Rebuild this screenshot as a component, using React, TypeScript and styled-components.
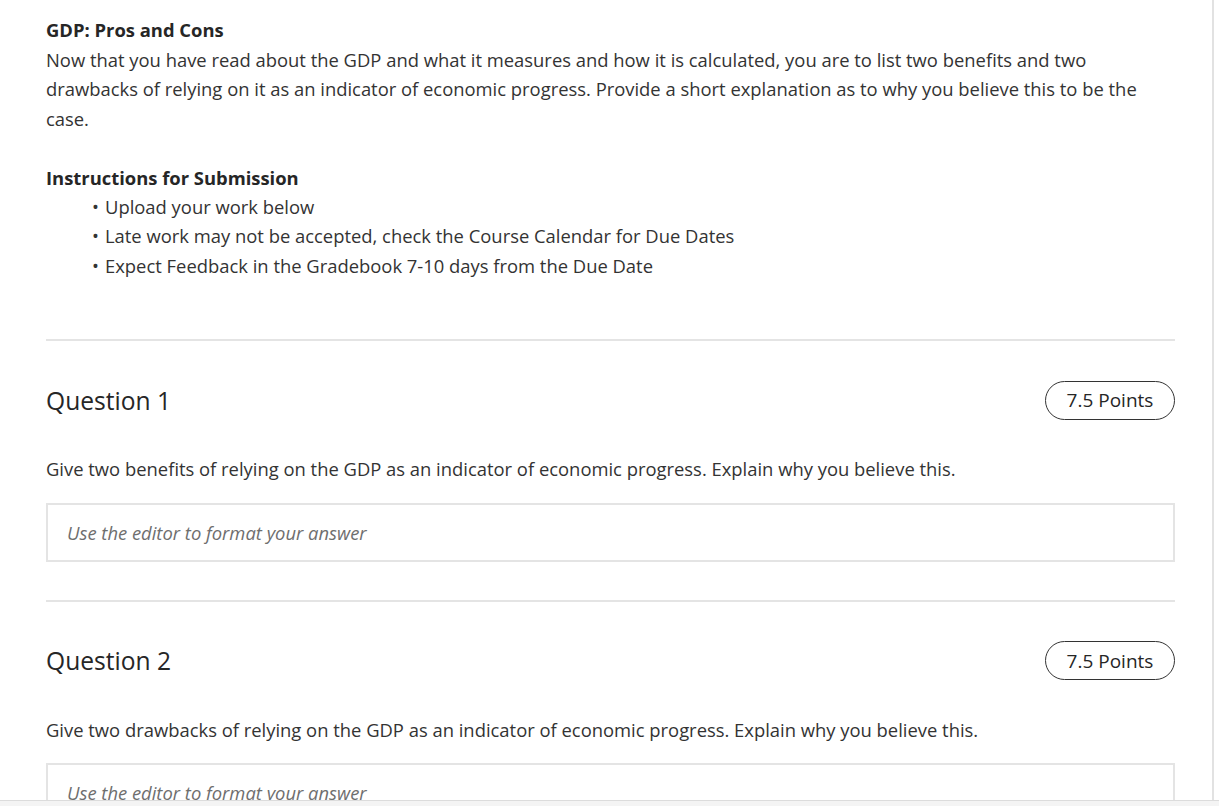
import React from 'react'
import styled, { createGlobalStyle } from 'styled-components'

const GlobalStyle = createGlobalStyle`
  html, body {
    margin: 0;
    padding: 0;
    background: #ffffff;
    overflow: hidden;
  }
  body {
    font-family: 'Open Sans', 'Noto Sans', sans-serif;
    color: #333333;
  }
`

const Screen = styled.div`
  display: flex;
  flex-direction: column;
  height: 806px;
  width: 1219px;
  overflow: hidden;
`

const Panel = styled.div`
  flex: 1;
  overflow: hidden;
  width: 1214px;
  border-right: 2px solid #e2e2e2;
  box-sizing: border-box;
`

const Content = styled.div`
  padding: 17px 0 0 46px;
  width: 1129px;
`

const Footer = styled.div`
  height: 5px;
  background: #f4f4f4;
  border-top: 1px solid #dcdcdc;
`

const Heading = styled.div`
  font-size: 18.4px;
  font-weight: 700;
  line-height: 26px;
  color: #262626;
`

const Paragraph = styled.p`
  margin: 0;
  font-size: 18.4px;
  line-height: 29.5px;
  color: #333333;
  white-space: nowrap;
`

const Intro = styled(Paragraph)`
  margin-top: 1.5px;
`

const SubHeading = styled(Heading)`
  margin-top: 31.5px;
`

const List = styled.ul`
  margin: 1px 0 0;
  padding: 0 0 0 46px;
  list-style: none;
`

const Item = styled.li`
  display: flex;
  font-size: 18.4px;
  line-height: 29.5px;
  color: #333333;

  &::before {
    content: '•';
    width: 13px;
    flex: none;
  }
`

const Divider = styled.hr<{ $top: number }>`
  margin: ${props => props.$top}px 0 0;
  border: none;
  border-top: 2px solid #e4e4e4;
  height: 0;
`

const QuestionHeader = styled.div`
  display: flex;
  align-items: center;
  justify-content: space-between;
  margin-top: 39px;
  height: 40px;
`

const QuestionTitle = styled.h2`
  margin: 0;
  font-size: 24.6px;
  font-weight: 400;
  color: #262626;
`

const PointsPill = styled.div`
  display: flex;
  align-items: center;
  justify-content: center;
  height: 39px;
  width: 130px;
  box-sizing: border-box;
  border: 1px solid #333333;
  border-radius: 20px;
  font-size: 19px;
  color: #262626;
`

const QuestionText = styled(Paragraph)`
  margin-top: 34px;
`

const AnswerBox = styled.div`
  margin-top: 19px;
  height: 59px;
  box-sizing: border-box;
  border: 2px solid #e4e4e4;
  display: flex;
  align-items: center;
  padding: 0 19px;
  font-size: 18.4px;
  font-style: italic;
  color: #6e6e6e;
`

type QuestionProps = {
  title: string
  points: string
  text: string
}

const Question: React.FC<QuestionProps> = ({ title, points, text }) => (
  <div>
    <QuestionHeader>
      <QuestionTitle>{title}</QuestionTitle>
      <PointsPill>{points}</PointsPill>
    </QuestionHeader>
    <QuestionText>{text}</QuestionText>
    <AnswerBox>Use the editor to format your answer</AnswerBox>
  </div>
)

const App: React.FC = () => {
  return (
    <Screen>
      <GlobalStyle />
      <Panel>
        <Content>
          <Heading>GDP: Pros and Cons</Heading>
          <Intro>
            Now that you have read about the GDP and what it measures and how it is calculated, you are to list two benefits and two
            <br />
            drawbacks of relying on it as an indicator of economic progress. Provide a short explanation as to why you believe this to be the
            <br />
            case.
          </Intro>

          <SubHeading>Instructions for Submission</SubHeading>
          <List>
            <Item>Upload your work below</Item>
            <Item>Late work may not be accepted, check the Course Calendar for Due Dates</Item>
            <Item>Expect Feedback in the Gradebook 7-10 days from the Due Date</Item>
          </List>

          <Divider $top={59} />
          <Question
            title="Question 1"
            points="7.5 Points"
            text="Give two benefits of relying on the GDP as an indicator of economic progress. Explain why you believe this."
          />

          <Divider $top={38} />
          <Question
            title="Question 2"
            points="7.5 Points"
            text="Give two drawbacks of relying on the GDP as an indicator of economic progress. Explain why you believe this."
          />
        </Content>
      </Panel>
      <Footer />
    </Screen>
  )
}

export default App
